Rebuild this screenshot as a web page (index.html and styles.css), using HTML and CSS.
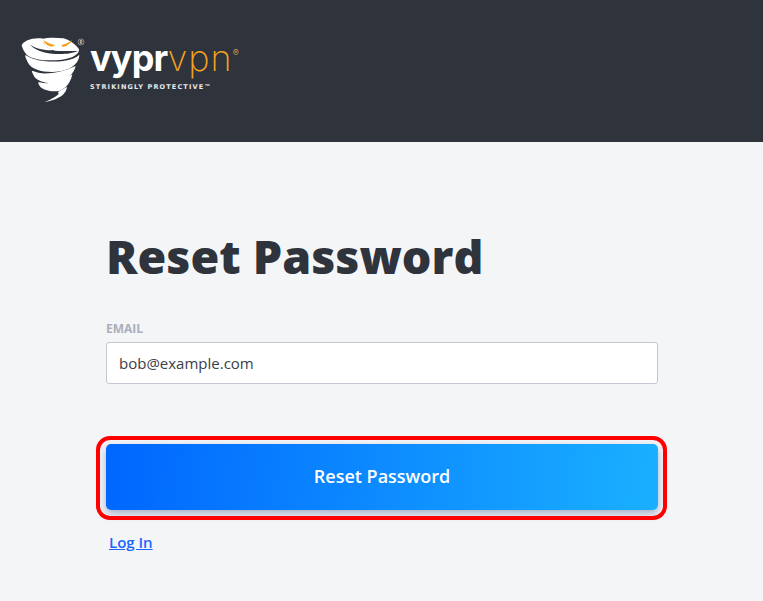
FILE: index.html
```html
<!DOCTYPE html>
<html lang="en">
<head>
<meta charset="utf-8">
<title>Reset Password</title>
<link rel="stylesheet" href="styles.css">
</head>
<body>
<header class="top">
  <div class="logo">
    <svg class="mark" viewBox="0 0 240 240" width="80" height="80" aria-hidden="true">
      <path class="w" d="M35 46C40 32 70 21 100 26C112 23 135 22 160 25C180 30 198 44 207 58C208 72 190 86 150 90C108 93 70 90 50 74C43 66 37 56 35 46Z"/>
      <path class="d" d="M61 45C72 38 86 35 99 37C102 46 112 56 135 62C155 64 180 62 203 63C190 70 165 73 138 72C108 71 76 62 61 45Z"/>
      <path class="w" d="M60 44C72 37 86 34 98 35C102 45 112 54 135 60C112 62 80 58 60 44Z"/>
      <path class="o" d="M100 31C110 38 124 42 136 46L124 50C112 48 104 42 100 31Z"/>
      <path class="o" d="M186 31C182 40 172 48 160 51L153 46C166 43 176 38 186 31Z"/>
      <path class="w" d="M46 80C45 76 46 75 50 77C72 92 120 98 160 93C182 89 198 84 208 74C208 95 190 117 150 124C108 130 64 120 54 98C51 92 48 86 46 80Z"/>
      <path class="w" d="M66 126C65 123 67 122 71 124C92 134 140 134 197 108C192 130 174 150 140 158C110 163 82 152 73 140C70 135 68 131 66 126Z"/>
      <path class="w" d="M85 160C84 157 86 156 90 157C112 164 150 158 187 133C182 155 172 172 150 182C125 188 102 180 92 172C89 168 87 165 85 160Z"/>
      <path class="w" d="M144 186L171 170C169 188 156 206 104 216C125 208 140 198 146 192Z"/>
      <circle class="reg" cx="213" cy="36" r="9"/>
      <text class="regr" x="213" y="41">R</text>
    </svg>
    <div class="word">
      <div class="name"><span class="vypr">vypr</span><span class="vpn">vpn</span><sup class="mk">®</sup></div>
      <div class="tag">STRIKINGLY PROTECTIVE™</div>
    </div>
  </div>
</header>
<main class="page">
  <h1 class="title">Reset Password</h1>
  <form class="form">
    <label class="label" for="email">EMAIL</label>
    <input class="field" id="email" type="text" value="bob@example.com">
    <div class="ringed">
      <button class="submit" type="button">Reset Password</button>
    </div>
    <a class="login" href="#">Log In</a>
  </form>
</main>
</body>
</html>
```
FILE: styles.css
```css
* { box-sizing: border-box; }
html, body { margin: 0; height: 100%; }
body {
  background: #f4f5f7;
  font-family: "Open Sans", sans-serif;
  overflow: hidden;
}
.top {
  height: 142px;
  background: #2e333c;
  padding: 30px 0 0 10px;
}
.logo { display: flex; align-items: flex-start; }
.mark { display: block; flex: none; }
.w { fill: #fff; }
.d { fill: #2e333c; }
.o { fill: #f5a11f; }
.reg { fill: none; stroke: #c9cbcf; stroke-width: 1.6; }
.regr { fill: #c9cbcf; font: 700 14px "Open Sans", sans-serif; text-anchor: middle; }
.word { display: flex; flex-direction: column; padding-top: 6px; }
.name {
  display: flex;
  align-items: flex-start;
  height: 46px;
  font-family: "Inter", sans-serif;
  font-size: 36px;
  line-height: 44px;
}
.vypr { color: #fff; font-weight: 700; letter-spacing: -0.8px; }
.vpn { color: #f5a11f; font-weight: 200; margin-left: 0; letter-spacing: 1px; }
.mk { color: #c99a55; font-size: 9px; line-height: 12px; margin: 11px 0 0 0; font-weight: 400; }
.tag {
  color: #e8e9eb;
  font-family: "DejaVu Sans", sans-serif;
  font-size: 6.5px;
  font-weight: 700;
  line-height: 9px;
  margin-top: 1px;
  letter-spacing: 1.15px;
  white-space: nowrap;
}
.page { padding: 81px 105px 0 106px; }
.title {
  margin: 0;
  color: #2e333c;
  font-size: 46.6px;
  font-weight: 800;
  line-height: 66px;
}
.form { display: flex; flex-direction: column; align-items: flex-start; margin-top: 32px; }
.label {
  color: #a9afbb;
  font-size: 12px;
  font-weight: 700;
  line-height: 16px;
  margin-bottom: 5px;
}
.field {
  width: 552px;
  height: 42px;
  padding: 0 12px;
  border: 1px solid #c4c8d2;
  border-radius: 3px;
  background: #fff;
  color: #3b4048;
  font: 400 15px "Open Sans", sans-serif;
}
.ringed { position: relative; margin-top: 60px; width: 552px; }
.ringed::after {
  content: "";
  position: absolute;
  inset: -8px -9px -10px -10px;
  border: 4px solid #ff0000;
  border-radius: 14px;
  pointer-events: none;
}
.submit {
  display: block;
  width: 100%;
  height: 66px;
  padding: 0 0 2px;
  border: 0;
  border-radius: 5px;
  background: linear-gradient(95deg, #0066ff 0%, #1ab0ff 100%);
  box-shadow: 0 4px 8px rgba(50, 75, 130, 0.4);
  color: #fff;
  font: 600 18px "Open Sans", sans-serif;
}
.login {
  margin: 22px 0 0 3px;
  color: #1a66ff;
  font-size: 15px;
  font-weight: 600;
  line-height: 20px;
}
```
